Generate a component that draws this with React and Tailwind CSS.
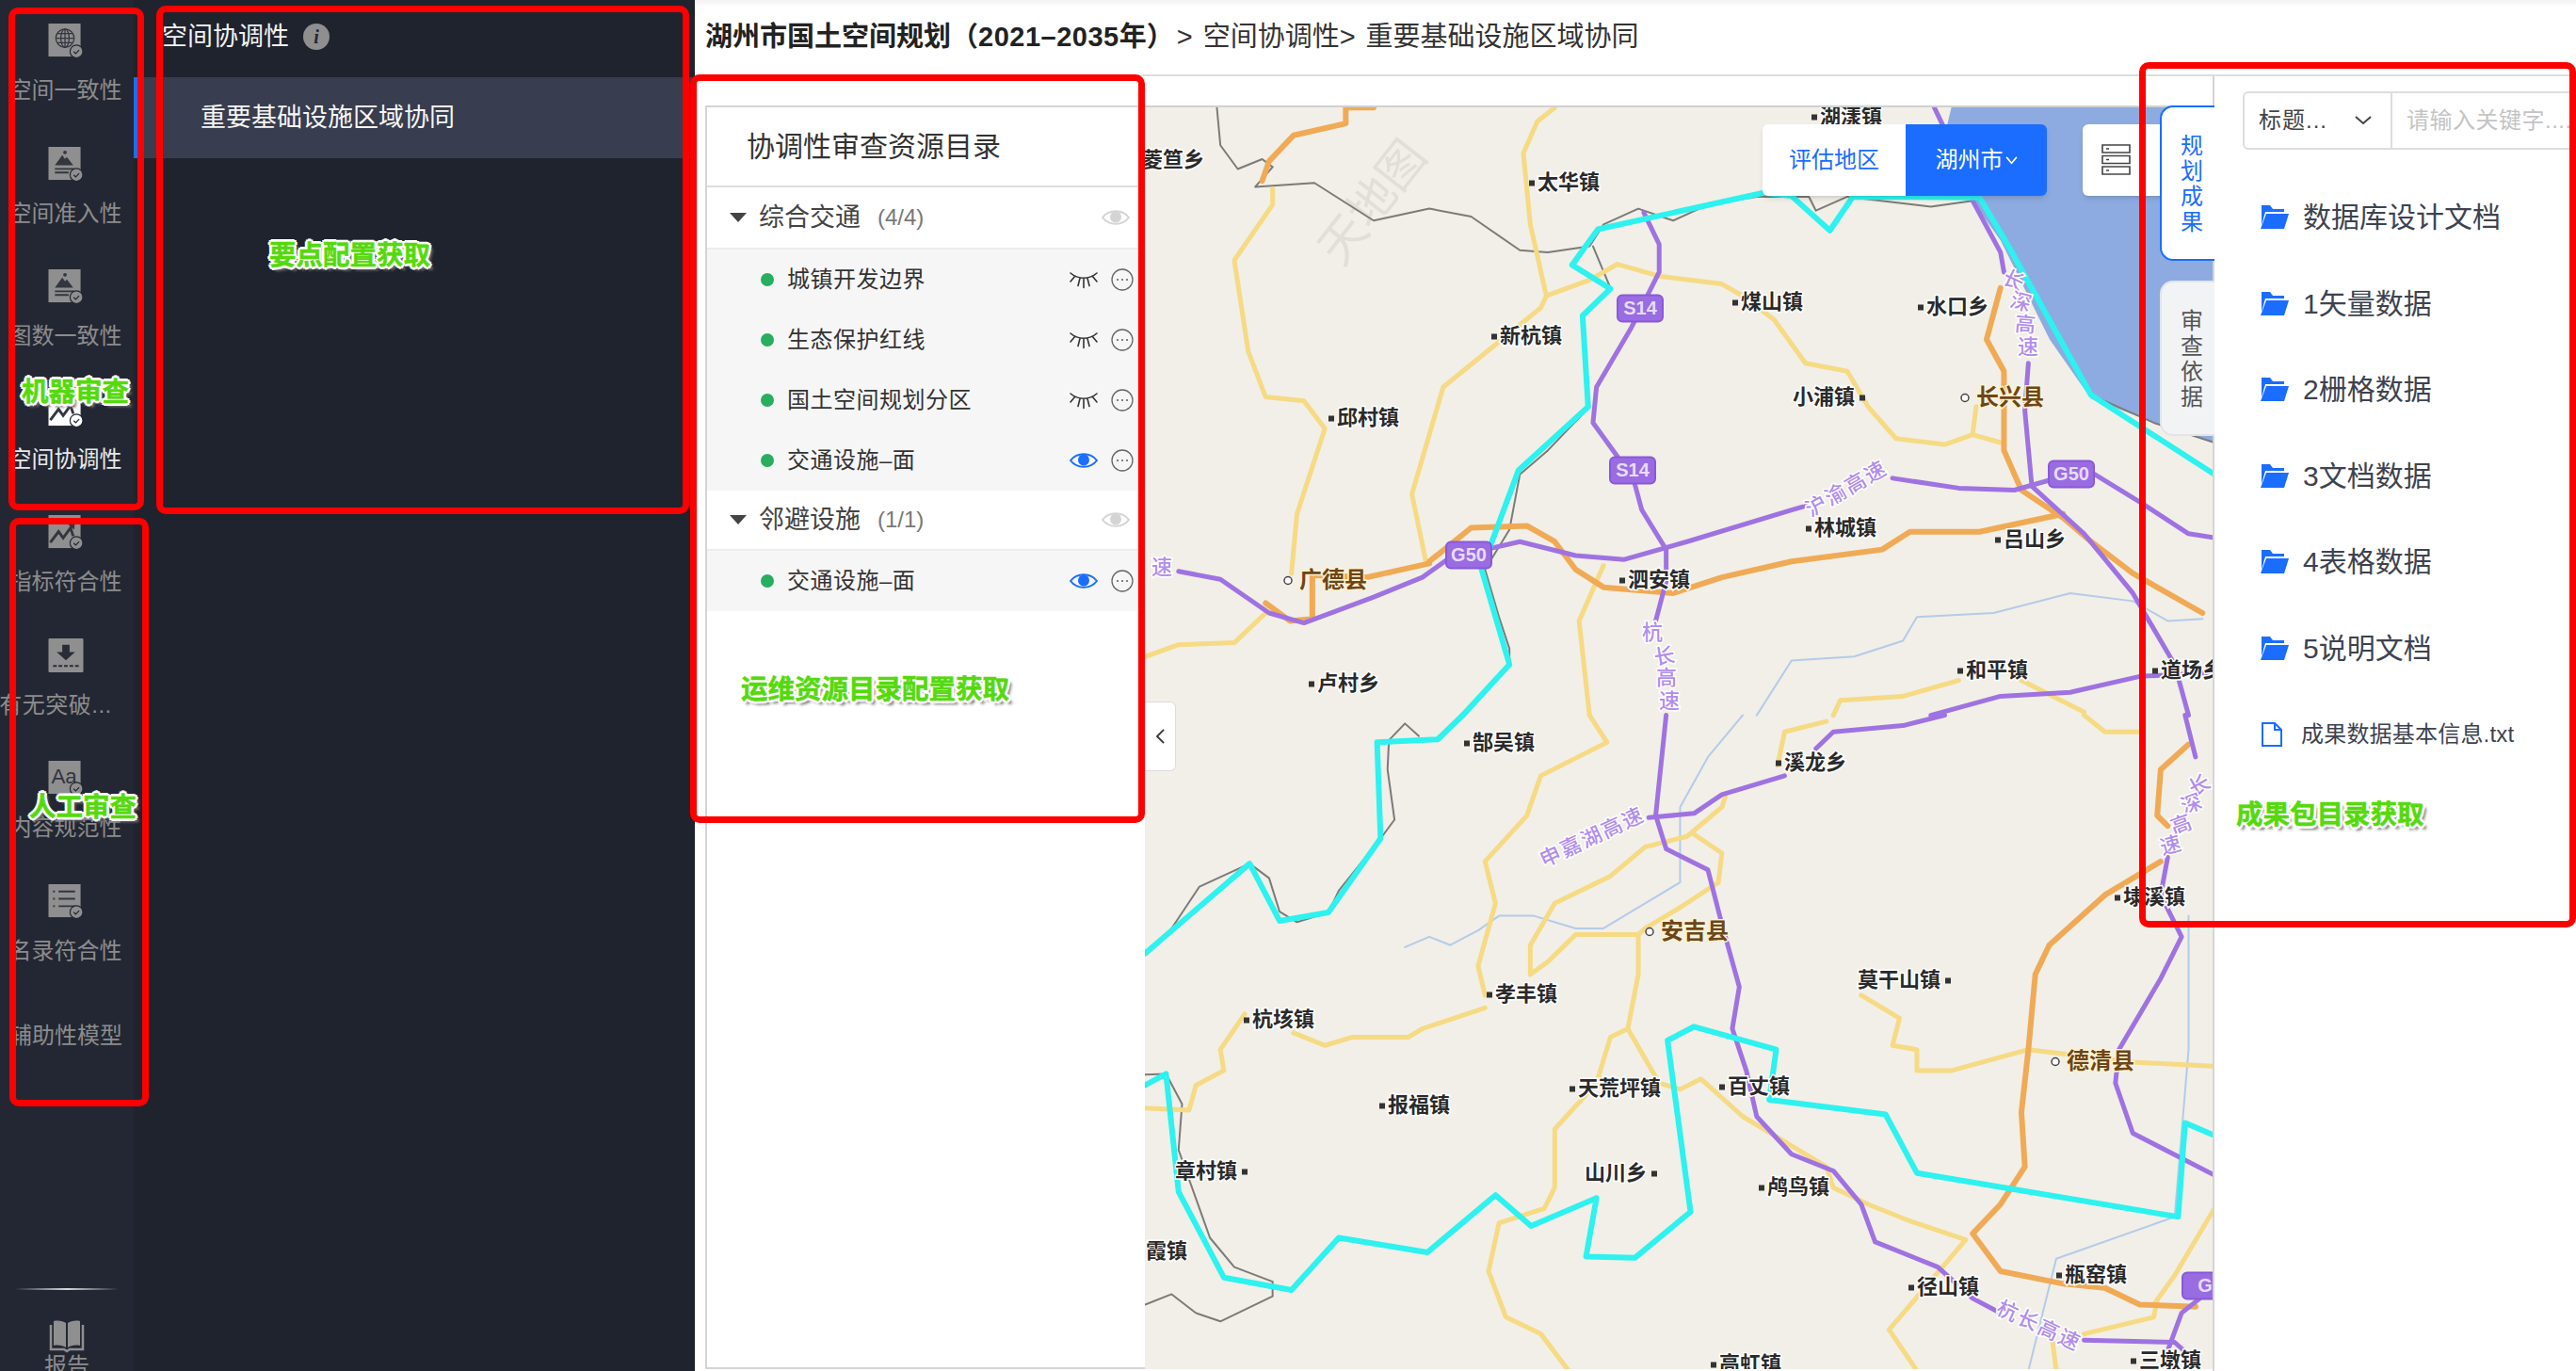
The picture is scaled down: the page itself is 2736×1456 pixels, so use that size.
const CJK = "font-['Liberation_Sans','Noto_Sans_CJK_SC',sans-serif]";

// map lines, written in the coordinates of the two map crops
const TOP = {
  yellow: [
    "610,35 585,70 565,150 575,330 598,510 590,540 520,640 450,740 430,860 405,1010 425,1180",
    "598,510 660,470 700,430 760,460 850,480 880,510 925,570 970,680 1030,700 1060,790 1100,870 1170,885 1210,860 1250,880",
    "1210,860 1215,790",
    "205,240 205,280 150,420 170,650 195,765 250,775 280,845 240,1060 232,1210",
    "22,1420 70,1390 150,1385 195,1310",
    "680,1190 645,1330 660,1568",
    "1010,1568 1020,1530 1110,1520 1190,1480",
    "1280,1480 1370,1560",
  ],
  orange: [
    "350,35 310,35 310,75 235,105 200,170 190,220",
    "430,1180 490,1095 570,1090 610,1130 640,1200 680,1245 780,1260 850,1220 950,1180 1080,1150 1120,1105 1220,1105 1340,1060",
    "265,1215 340,1220 430,1185",
    "262,1215 262,1325 230,1330 195,1285",
    "1250,490 1230,620 1255,700 1255,900 1280,1000 1340,1070 1380,1130 1440,1210 1540,1310",
  ],
  purple: [
    "70,1205 130,1225 200,1310 250,1335 350,1270 420,1220 460,1170 560,1130 640,1165 710,1175 800,1130 950,1050 970,1040",
    "1095,970 1190,995 1270,1000 1320,975",
    "1385,960 1450,1030 1520,1110 1557,1120",
    "738,300 760,380 760,450 720,590 670,740 665,830 700,915",
    "725,985 735,1050 770,1150 770,1230 755,1330",
    "1155,35 1170,90 1210,270 1250,400 1255,450",
    "1290,680 1285,800 1295,990 1370,1110 1440,1260 1500,1440 1520,1568",
    "1150,1568 1250,1520 1350,1510 1450,1470 1557,1460",
  ],
  gray: [
    "125,35 130,130 155,190 190,165 205,185 180,235 265,225 350,320 430,290 490,310 560,395 600,400 660,385 680,330 730,290 780,320 830,280 900,260 975,260 985,295 1030,260 1150,285 1210,270",
    "665,385 690,490",
    "660,790 600,900 560,960 545,1100 510,1200 530,1320 545,1400 545,1440 480,1568",
    "1380,760 1470,830 1557,880",
  ],
  river: [
    "900,1568 950,1430 1040,1420 1110,1380 1130,1320 1240,1310 1350,1260 1440,1280 1490,1330 1540,1325",
  ],
  cyan: [
    "478,1568 545,1440 505,1200 558,950 658,790 650,560 690,492 635,432 672,342 910,250 950,258 1005,345 1038,260 1220,262 1260,380 1380,760 1557,960",
  ],
};

const BOTTOM = {
  yellow: [
    "660,0 685,65 590,145 570,240 510,350 525,450 500,600 510,670",
    "510,700 420,750 400,770 320,770 280,790 235,760",
    "165,715 130,800 135,850 95,885 85,945 22,940",
    "855,195 850,220 800,290 740,315 690,385 610,450 575,550 575,620",
    "810,285 850,330 845,400 790,460 740,510 730,525 640,525 600,590 575,620",
    "730,525 730,620 715,750 690,770 670,880 610,990 610,1130 595,1180 530,1215 515,1330 540,1440 590,1480 630,1568",
    "715,750 760,880 790,895 820,870 880,960 1000,1080 1010,1130 1060,1170 1120,1210 1200,1255 1090,1470 1130,1568",
    "1050,670 1105,725 1095,790 1130,800 1130,850 1180,850 1290,800 1440,830 1557,840",
    "930,120 940,40 1000,15",
    "1370,0 1400,40 1450,40",
    "1475,1400 1470,1440 1370,1480",
    "1325,1500 1330,1568",
    "1557,1180 1500,1340 1470,1410",
  ],
  orange: [
    "1480,350 1400,430 1320,550 1300,620 1290,800 1280,950 1285,1080 1250,1170 1210,1240 1250,1330 1340,1360 1400,1370 1450,1410 1530,1415",
    "1520,70 1480,130 1475,240 1490,265",
  ],
  purple: [
    "770,0 755,240 770,320 830,370 850,500 875,650 865,750 885,850 900,960 950,1050 1010,1090 1050,1170 1070,1260 1160,1320 1210,1395 1250,1430",
    "745,245 810,235 850,190 940,145",
    "985,80 1010,40 1110,25 1170,0",
    "1515,0 1530,100",
    "1490,340 1480,430 1510,530 1480,630 1420,800 1415,880 1440,1000 1557,1100",
    "1370,1495 1500,1500 1520,1530",
    "1490,1520 1510,1430 1540,1390",
  ],
  gray: [
    "372,60 370,130 380,250 360,295 300,420 285,472 240,495 215,470 200,390 172,355 100,410 60,510 22,570",
    "372,60 395,20 415,50",
    "22,860 52,858 75,930 70,1040 100,1180 115,1250 150,1320 205,1355 205,1390 130,1450 95,1430 60,1385 22,1410",
  ],
  river: [
    "395,555 430,530 460,550 500,515 530,480 580,480 640,510 680,510 720,470 790,400 790,220 830,100 880,0",
    "1520,480 1520,800 1500,1200 1330,1300 1290,1568",
  ],
  cyan: [
    "478,0 442,58 355,65 360,295 285,472 215,492 172,355 22,570",
    "22,885 52,858 70,1140 135,1345 232,1375 300,1250 427,1285 525,1148 576,1222 670,1155 655,1295 725,1298 805,1188 772,778 810,745 928,800 918,920 1085,955 1130,1095 1505,1200 1515,975 1557,1005",
  ],
};

const LINE_STYLES = [
  ["river", "#b4cbe9", 2],
  ["gray", "#7b7b78", 2],
  ["yellow", "#f6da84", 5],
  ["orange", "#f0aa55", 6],
  ["purple", "#9f72e2", 5],
  ["cyan", "#2df2ef", 6],
];

// left x, centre y
const TOWNS = [
  ["湖漾镇", 1933, 125, "before"],
  ["菱笪乡", 1213, 171],
  ["太华镇", 1633, 195, "before"],
  ["煤山镇", 1849, 322, "before"],
  ["水口乡", 2046, 327, "before"],
  ["新杭镇", 1593, 358, "before"],
  ["小浦镇", 1904, 423, "after"],
  ["邱村镇", 1420, 445, "before"],
  ["林城镇", 1927, 562, "before"],
  ["吕山乡", 2128, 574, "before"],
  ["泗安镇", 1729, 617, "before"],
  ["卢村乡", 1399, 727, "before"],
  ["和平镇", 2088, 713, "before"],
  ["道场乡", 2295, 713, "before"],
  ["郜吴镇", 1564, 790, "before"],
  ["溪龙乡", 1895, 811, "before"],
  ["埭溪镇", 2255, 954, "before"],
  ["莫干山镇", 1973, 1042, "after"],
  ["孝丰镇", 1588, 1057, "before"],
  ["杭垓镇", 1330, 1084, "before"],
  ["天荒坪镇", 1676, 1157, "before"],
  ["百丈镇", 1835, 1155, "before"],
  ["报福镇", 1474, 1175, "before"],
  ["章村镇", 1248, 1245, "after"],
  ["山川乡", 1683, 1247, "after"],
  ["鸬鸟镇", 1877, 1262, "before"],
  ["霞镇", 1217, 1330],
  ["径山镇", 2036, 1368, "before"],
  ["瓶窑镇", 2193, 1355, "before"],
  ["高虹镇", 1826, 1450, "before"],
  ["三墩镇", 2272, 1446, "before"],
];

const COUNTIES = [
  ["长兴县", 2099, 423],
  ["广德县", 1380, 617],
  ["安吉县", 1764, 990],
  ["德清县", 2195, 1128],
];

const SHIELDS = [
  ["S14", 1742, 328],
  ["S14", 1734, 500],
  ["G50", 1560, 590],
  ["G50", 2200, 504],
  ["G", 2342, 1366],
];

// single characters along a road: text, x, y, rotation
const ROAD_CHARS = [
  ["长", 2138, 300, 25], ["深", 2146, 323, 15], ["高", 2151, 347, 5], ["速", 2154, 371, 0],
  ["杭", 1755, 674, 0], ["长", 1768, 699, -10], ["高", 1770, 722, 0], ["速", 1773, 747, 0],
  ["长", 2337, 836, -30], ["深", 2328, 856, -20], ["高", 2317, 878, -20], ["速", 2306, 900, -15],
  ["速", 1234, 605, 0],
];

const ROAD_NAMES = [
  ["沪渝高速", 1962, 521, -30],
  ["申嘉湖高速", 1692, 891, -25],
  ["杭长高速", 2165, 1410, 25],
];

function MapLines({ lines, transform }) {
  return (
    <g transform={transform} fill="none" strokeLinejoin="round" strokeLinecap="round">
      {LINE_STYLES.map(([key, color, width]) =>
        lines[key].map((pts, i) => (
          <polyline
            key={key + i}
            points={pts}
            stroke={color}
            strokeWidth={width}
            vectorEffect="non-scaling-stroke"
          />
        ))
      )}
    </g>
  );
}

function MapDrawing() {
  return (
    <svg viewBox="1216 115 1134 1339" className="absolute inset-0 h-full w-full">
      <polygon
        points="2073,113 2066,142 2095,214 2125,256 2177,361 2221,424 2288,449 2352,470 2352,113"
        fill="#8dabe0"
      />
      <text x="1425" y="285" fontSize="50" fill="#e0dfd8" transform="rotate(-52 1425 285)">
        天地图
      </text>
      <MapLines lines={TOP} transform="translate(1200,100) scale(0.7398,0.421)" />
      <MapLines lines={BOTTOM} transform="translate(1200,760) scale(0.7398,0.444)" />

      {ROAD_NAMES.map(([name, x, y, r]) => (
        <text
          key={name}
          x={x}
          y={y}
          fontSize="22"
          fontWeight="500"
          textAnchor="middle"
          dominantBaseline="middle"
          fill="#b28ded"
          stroke="#ffffff"
          strokeWidth="3"
          paintOrder="stroke"
          letterSpacing="2"
          transform={`rotate(${r} ${x} ${y})`}
        >
          {name}
        </text>
      ))}
      {ROAD_CHARS.map(([c, x, y, r], i) => (
        <text
          key={i}
          x={x}
          y={y}
          fontSize="22"
          fontWeight="500"
          textAnchor="middle"
          dominantBaseline="middle"
          fill="#b28ded"
          stroke="#ffffff"
          strokeWidth="3"
          paintOrder="stroke"
          transform={`rotate(${r} ${x} ${y})`}
        >
          {c}
        </text>
      ))}

      {SHIELDS.map(([name, x, y], i) => (
        <g key={i}>
          <rect x={x - 24} y={y - 14} width="48" height="28" rx="5" fill="#9a6ce2" stroke="#8a58dc" strokeWidth="2" />
          <text x={x} y={y + 1} fontSize="20" fontWeight="700" textAnchor="middle" dominantBaseline="middle" fill="#e6dcfa">
            {name}
          </text>
        </g>
      ))}

      {TOWNS.map(([name, x, y, dot]) => {
        const w = name.length * 22;
        return (
          <g key={name}>
            {dot === "before" && <rect x={x - 9} y={y - 3} width="6" height="6" fill="#333" />}
            {dot === "after" && <rect x={x + w + 5} y={y - 3} width="6" height="6" fill="#333" />}
            <text
              x={x}
              y={y + 1}
              fontSize="22"
              fontWeight="700"
              dominantBaseline="middle"
              fill="#2a2a2a"
              stroke="#ffffff"
              strokeWidth="3"
              paintOrder="stroke"
            >
              {name}
            </text>
          </g>
        );
      })}
      {COUNTIES.map(([name, x, y]) => (
        <g key={name}>
          <circle cx={x - 12} cy={y} r="4" fill="#fff" stroke="#444" strokeWidth="1.5" />
          <text
            x={x}
            y={y + 1}
            fontSize="24"
            fontWeight="700"
            dominantBaseline="middle"
            fill="#6e4518"
            stroke="#fdf3cf"
            strokeWidth="3"
            paintOrder="stroke"
          >
            {name}
          </text>
        </g>
      ))}
    </svg>
  );
}

function Badge({ active }) {
  return (
    <g>
      <circle cx="30.5" cy="30.5" r="7" fill={active ? "#ffffff" : "#8f8f8f"} stroke="#232733" strokeWidth="1.2" />
      <path d="M27.5 30.5l2.2 2.2 3.8-3.8" fill="none" stroke="#232733" strokeWidth="1.3" />
    </g>
  );
}

function Tile({ children, active }) {
  const color = active ? "#ffffff" : "#8f8f8f";
  return (
    <svg viewBox="0 0 38 38" className="h-[37px] w-[38px]">
      <rect x="0" y="0" width="35" height="36" fill={color} />
      {children}
    </svg>
  );
}

function GlobeIcon() {
  return (
    <Tile>
      <g fill="none" stroke="#33363f" strokeWidth="1.3">
        <circle cx="18" cy="16" r="10" />
        <ellipse cx="18" cy="16" rx="4.5" ry="10" />
        <path d="M8 16h20M9.5 11h17M9.5 21h17M18 6v20" />
      </g>
      <Badge />
    </Tile>
  );
}

function MountainIcon() {
  return (
    <Tile>
      <path d="M7 20l8-11 3 4 2-2 7 9z" fill="#33363f" />
      <circle cx="18" cy="6" r="2" fill="#33363f" />
      <path d="M7 24h21M7 28h15" stroke="#33363f" strokeWidth="2" />
      <Badge />
    </Tile>
  );
}

function ChartIcon({ active }) {
  return (
    <Tile active={active}>
      <path d="M2 30l9-12 5 7 8-11 3 9" fill="none" stroke="#33363f" strokeWidth="3" />
      <path d="M20 9l9-2-1 9z" fill="#33363f" />
      <Badge active={active} />
    </Tile>
  );
}

function DownloadIcon() {
  return (
    <svg viewBox="0 0 38 38" className="h-[37px] w-[38px]">
      <rect x="0" y="0" width="38" height="37" rx="1" fill="#8f8f8f" />
      <path d="M15 7h8v8h6L19 24 9 15h6z" fill="#2a2d38" />
      <path d="M5 30h28" stroke="#2a2d38" strokeWidth="2" strokeDasharray="4 2" />
    </svg>
  );
}

function TextIcon() {
  return (
    <Tile>
      <text x="3" y="25" fontSize="23" fill="#33363f" fontFamily="Liberation Sans">
        Aa
      </text>
      <Badge />
    </Tile>
  );
}

function ListIcon() {
  return (
    <Tile>
      <path d="M11 8h18M11 16h18M11 24h18" stroke="#33363f" strokeWidth="2" />
      <path d="M5 8h2M5 16h2M5 24h2" stroke="#33363f" strokeWidth="2" />
      <Badge />
    </Tile>
  );
}

function BookIcon() {
  return (
    <svg viewBox="0 0 38 36" className="h-[36px] w-[38px]">
      <path d="M5 2c5-1 10 0 13 2v26c-3-2-8-3-13-2z" fill="#8f8f8f" />
      <path d="M33 2c-5-1-10 0-13 2v26c3-2 8-3 13-2z" fill="#8f8f8f" />
      <path d="M2 6v26h14l3 2 3-2h14V6" fill="none" stroke="#8f8f8f" strokeWidth="2.5" />
    </svg>
  );
}

const RAIL = [
  { label: "空间一致性", icon: <GlobeIcon /> },
  { label: "空间准入性", icon: <MountainIcon /> },
  { label: "图数一致性", icon: <MountainIcon /> },
  { label: "空间协调性", icon: <ChartIcon active />, active: true },
  { label: "指标符合性", icon: <ChartIcon /> },
  { label: "有无突破...", icon: <DownloadIcon />, shift: true },
  { label: "内容规范性", icon: <TextIcon /> },
  { label: "名录符合性", icon: <ListIcon /> },
];

function Rail() {
  return (
    <div className="flex h-full w-[142px] shrink-0 flex-col overflow-hidden bg-[#232733] pt-[25px]">
      {RAIL.map((item) => (
        <div key={item.label} className="flex h-[130.5px] shrink-0 flex-col items-center">
          <div className="-ml-[2px] h-[37px]">{item.icon}</div>
          <div
            className={`mt-[20px] whitespace-nowrap text-[24px] leading-[28px] ${
              item.active ? "text-[#e8e8e8]" : "text-[#8c8c8c]"
            } ${item.shift ? "-ml-[24px] tracking-[0.5px]" : "-ml-[3px]"}`}
          >
            {item.label}
          </div>
        </div>
      ))}
      <div className="shrink-0 -translate-x-[1px] pt-[17px] text-center text-[24px] leading-[28px] whitespace-nowrap text-[#8c8c8c]">
        辅助性模型
      </div>
      <div className="mt-auto flex h-[88px] shrink-0 flex-col items-center">
        <div className="h-[2px] w-[110px] shrink-0 bg-gradient-to-r from-transparent via-[#d8d8d8] to-transparent" />
        <div className="mt-[31px] h-[36px] shrink-0">
          <BookIcon />
        </div>
        <div className="shrink-0 text-[24px] leading-[28px] text-[#8c8c8c]">报告</div>
      </div>
    </div>
  );
}

function SubPanel() {
  return (
    <div className="h-full w-[596px] shrink-0 bg-[#1f232e]">
      <div className="flex h-[82px] items-start pl-[30px] pt-[21px]">
        <span className="text-[27px] leading-[36px] text-[#f2f2f2]">空间协调性</span>
        <span className="ml-[15px] mt-[4px] flex h-[28px] w-[28px] items-center justify-center rounded-full bg-[#8f8f8f] font-['Liberation_Serif',serif] text-[20px] font-bold italic text-[#232733]">
          i
        </span>
      </div>
      <div className="flex h-[86px] items-center border-l-4 border-[#1a6dff] bg-[#383d4f] pl-[67px] text-[27px] text-[#f5f5f5]">
        重要基础设施区域协同
      </div>
    </div>
  );
}

function Header() {
  return (
    <div className="flex h-[81px] shrink-0 items-center border-b-2 border-[#dddddd] bg-gradient-to-b from-[#f3f3f3] to-[#ffffff] to-[10%] pl-[11px] text-[29px] text-[#333333]">
      <span className="font-bold text-[#222222]">
        湖州市国土空间规划（<span className="tracking-[0.5px]">2021–2035</span>年）
      </span>
      <span className="ml-[3px]">&gt;</span>
      <span className="ml-[11px]">空间协调性&gt;</span>
      <span className="ml-[11px]">重要基础设施区域协同</span>
    </div>
  );
}

function OpenEye({ color, pupil }) {
  return (
    <svg viewBox="0 0 30 18" className="h-[18px] w-[30px]">
      <path d="M1 9c7-9 21-9 28 0-7 9-21 9-28 0z" fill="none" stroke={color} strokeWidth="2" />
      <circle cx="15" cy="8.5" r="6" fill={pupil} />
    </svg>
  );
}

function ClosedEye() {
  return (
    <svg viewBox="0 0 30 20" className="h-[20px] w-[30px]">
      <path
        d="M1 3c8 7 20 7 28 0M6 6L1 12M11 8.5l-2 8M15 9.5v9M19 8.5l2 8M24 6l5 6"
        fill="none"
        stroke="#333333"
        strokeWidth="1.6"
        strokeLinecap="round"
      />
    </svg>
  );
}

function More() {
  return (
    <svg viewBox="0 0 24 24" className="h-[24px] w-[24px]">
      <circle cx="12" cy="12" r="11" fill="none" stroke="#666666" strokeWidth="1.3" />
      <circle cx="7" cy="12" r="1.1" fill="#666666" />
      <circle cx="12" cy="12" r="1.1" fill="#666666" />
      <circle cx="17" cy="12" r="1.1" fill="#666666" />
    </svg>
  );
}

function Group({ name, count, tall }) {
  return (
    <div
      className={`flex items-center border-b-2 border-[#ececec] pl-[24px] pr-[16px] ${
        tall ? "h-[66px]" : "h-[64px]"
      }`}
    >
      <svg viewBox="0 0 18 10" className="h-[10px] w-[18px]">
        <path d="M0 0h18L9 10z" fill="#444444" />
      </svg>
      <span className="ml-[13px] text-[27px] text-[#444444]">{name}</span>
      <span className="ml-[18px] text-[24px] text-[#777777]">{count}</span>
      <span className="ml-auto">
        <OpenEye color="#d4d4d4" pupil="#d4d4d4" />
      </span>
    </div>
  );
}

function Layer({ name, on }) {
  return (
    <div className="flex h-[64px] items-center bg-[#f6f6f6] pl-[57px] pr-[12px]">
      <span className="h-[14px] w-[14px] rounded-full bg-[#27ae60]" />
      <span className="ml-[14px] text-[24px] tracking-[0.5px] text-[#333333]">{name}</span>
      <span className="ml-auto">{on ? <OpenEye color="#1a6dff" pupil="#1a6dff" /> : <ClosedEye />}</span>
      <span className="ml-[14px]">
        <More />
      </span>
    </div>
  );
}

function Directory() {
  return (
    <div className="flex h-full w-[478px] shrink-0 flex-col bg-white pl-[11px] pt-[31px] pb-[2px]">
      <div className="flex-1 border-x-2 border-y-2 border-[#d4d4d4] border-r-0">
        <div className="flex h-[85px] items-center border-b-2 border-[#dddddd] pl-[42px] text-[30px] text-[#333333]">
          协调性审查资源目录
        </div>
        <Group name="综合交通" count="(4/4)" tall />
        <Layer name="城镇开发边界" />
        <Layer name="生态保护红线" />
        <Layer name="国土空间规划分区" />
        <Layer name="交通设施–面" on />
        <Group name="邻避设施" count="(1/1)" />
        <Layer name="交通设施–面" on />
      </div>
    </div>
  );
}

function MapArea() {
  return (
    <div className="flex h-full flex-1 flex-col bg-white pt-[31px] pb-[2px]">
      <div className="relative flex-1 overflow-hidden border-t-2 border-[#d0d0d0] bg-[#f1efe7]">
        <MapDrawing />
        <div className="absolute left-0 top-[631px] flex h-[74px] w-[33px] items-center justify-center rounded-r-[6px] border border-l-0 border-[#dddddd] bg-white">
          <svg viewBox="0 0 12 20" className="h-[18px] w-[11px]">
            <path d="M10 2L2 10l8 8" fill="none" stroke="#333333" strokeWidth="2" />
          </svg>
        </div>
        <div className="absolute left-[656px] top-[18px] flex h-[76px] overflow-hidden rounded-[6px] text-[24px] shadow-md">
          <div className="flex w-[152px] items-center justify-center bg-white text-[#1a6dff]">评估地区</div>
          <div className="flex w-[150px] items-center justify-center bg-[#1a6dff] text-white">
            湖州市
            <svg viewBox="0 0 14 10" className="ml-[2px] h-[9px] w-[13px]">
              <path d="M1 1l6 7 6-7" fill="none" stroke="#ffffff" strokeWidth="1.8" />
            </svg>
          </div>
        </div>
        <div className="absolute left-[996px] top-[18px] flex h-[76px] w-[100px] items-start rounded-l-[6px] bg-white pl-[20px] pt-[21px] shadow-md">
          <svg viewBox="0 0 31 33" className="h-[33px] w-[31px]">
            <path d="M1 1h29v8H1zM1 12.5h29v8H1zM1 24h29v8H1z" fill="none" stroke="#444444" strokeWidth="1.6" />
            <path d="M5 5h3M5 16.5h3M5 28h3" stroke="#444444" strokeWidth="1.6" />
          </svg>
        </div>
      </div>
    </div>
  );
}

const FOLDERS = ["数据库设计文档", "1矢量数据", "2栅格数据", "3文档数据", "4表格数据", "5说明文档"];

function FolderIcon() {
  return (
    <svg viewBox="0 0 31 27" className="h-[27px] w-[31px] shrink-0">
      <path d="M2 1h9l3 4h12v3H6L2 22z" fill="#1a6dff" />
      <path d="M7 10h24l-5 16H1z" fill="#1a6dff" />
    </svg>
  );
}

function FileIcon() {
  return (
    <svg viewBox="0 0 22 26" className="h-[26px] w-[22px] shrink-0">
      <path d="M1 1h13l7 7v17H1z" fill="none" stroke="#1a6dff" strokeWidth="2" />
      <path d="M14 1v7h7" fill="none" stroke="#1a6dff" strokeWidth="2" />
    </svg>
  );
}

function VTab({ text, active }) {
  return (
    <div
      className={`flex h-[165px] w-[58px] items-center justify-center rounded-l-[14px] border-y-2 border-l-2 ${
        active ? "border-[#1a6dff] bg-white text-[#1a6dff]" : "border-[#e4e4e8] bg-[#f2f3f5] text-[#555555]"
      }`}
    >
      <span className="ml-[8px] w-[24px] text-center text-[24px] leading-[27px]">{text}</span>
    </div>
  );
}

function ResultPanel() {
  return (
    <div className="relative h-full w-[386px] shrink-0 border-l-2 border-[#d4d4d4] bg-white pl-[30px] pt-[16px]">
      <div className="absolute -left-[58px] top-[31px] flex flex-col gap-[21px]">
        <VTab text="规划成果" active />
        <VTab text="审查依据" />
      </div>
      <div className="flex h-[62px] w-full">
        <div className="flex w-[159px] shrink-0 items-center justify-between rounded-l-[6px] border-2 border-[#dddddd] pl-[15px] pr-[20px] text-[24px] tracking-[1px] text-[#444444]">
          标题...
          <svg viewBox="0 0 18 10" className="h-[10px] w-[18px]">
            <path d="M1 1l8 7 8-7" fill="none" stroke="#444444" strokeWidth="2" />
          </svg>
        </div>
        <div className="flex flex-1 items-center overflow-hidden whitespace-nowrap border-y-2 border-r-0 border-[#dddddd] pl-[15px] text-[24px] tracking-[0.5px] text-[#c4c4c4]">
          请输入关键字....
        </div>
      </div>
      <div className="pt-[26px]">
        {FOLDERS.map((f) => (
          <div key={f} className="flex h-[91.5px] items-center pl-[18px]">
            <FolderIcon />
            <span className="ml-[15px] text-[30px] text-[#3d4350]">{f}</span>
          </div>
        ))}
        <div className="flex h-[91.5px] items-center pl-[20px]">
          <FileIcon />
          <span className="ml-[20px] text-[24px] tracking-[0.2px] text-[#3d4350]">成果数据基本信息.txt</span>
        </div>
      </div>
    </div>
  );
}

const GREEN =
  "absolute z-20 whitespace-nowrap text-[28.5px] leading-none font-bold text-[#55d90e] [-webkit-text-stroke:0.5px_#55d90e] [text-shadow:3px_0_0_#fff,-3px_0_0_#fff,0_3px_0_#fff,0_-3px_0_#fff,2px_2px_0_#fff,-2px_-2px_0_#fff,2px_-2px_0_#fff,-2px_2px_0_#fff,4px_4px_3px_#777]";
const RED = "absolute z-10 rounded-[10px] border-[7px] border-[#ff0000]";

function Annotations() {
  return (
    <>
      <div className={`${RED} left-[9px] top-[8px] h-[534px] w-[144px]`} />
      <div className={`${RED} left-[166px] top-[6px] h-[540px] w-[566px]`} />
      <div className={`${RED} left-[10px] top-[550px] h-[625px] w-[148px]`} />
      <div className={`${RED} left-[733px] top-[79px] h-[795px] w-[483px]`} />
      <div className={`${RED} left-[2272px] top-[66px] h-[919px] w-[464px]`} />
      <div className={`${GREEN} left-[23px] top-[402px]`}>机器审查</div>
      <div className={`${GREEN} left-[286px] top-[257px]`}>要点配置获取</div>
      <div className={`${GREEN} left-[31px] top-[843px]`}>人工审查</div>
      <div className={`${GREEN} left-[787px] top-[718px]`}>运维资源目录配置获取</div>
      <div className={`${GREEN} left-[2375px] top-[851px]`}>成果包目录获取</div>
    </>
  );
}

export default function App() {
  return (
    <div className={`relative flex h-[1456px] w-[2736px] overflow-hidden bg-white ${CJK}`}>
      <Rail />
      <SubPanel />
      <div className="flex h-full min-w-0 flex-1 flex-col">
        <Header />
        <div className="flex min-h-0 flex-1">
          <Directory />
          <MapArea />
          <ResultPanel />
        </div>
      </div>
      <Annotations />
    </div>
  );
}
